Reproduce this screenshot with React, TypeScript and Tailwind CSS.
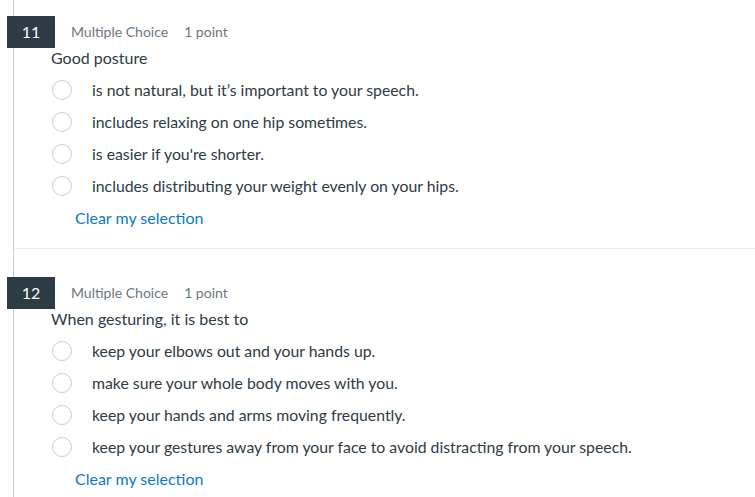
const questions = [
  {
    num: 11,
    text: "Good posture",
    options: [
      "is not natural, but it\u2019s important to your speech.",
      "includes relaxing on one hip sometimes.",
      "is easier if you're shorter.",
      "includes distributing your weight evenly on your hips.",
    ],
  },
  {
    num: 12,
    text: "When gesturing, it is best to",
    options: [
      "keep your elbows out and your hands up.",
      "make sure your whole body moves with you.",
      "keep your hands and arms moving frequently.",
      "keep your gestures away from your face to avoid distracting from your speech.",
    ],
  },
];

function Question({ q, first }: { q: (typeof questions)[number]; first: boolean }) {
  return (
    <div className={first ? "pt-4 pb-5" : "border-t border-[#eeeeee] pt-[28px] pb-5"}>
      <div className="flex items-center">
        <div className="-ml-[7px] flex h-8 w-12 items-center justify-center bg-[#2d3b45] text-[16px] text-white">
          {q.num}
        </div>
        <div className="ml-4 flex gap-4 pb-[2px] text-[14px] text-[#6b7780]">
          <span>Multiple Choice</span>
          <span>1 point</span>
        </div>
      </div>
      <div className="pl-[37px] text-[16px] leading-5 text-[#2d3b45]">{q.text}</div>
      <div className="mt-[6px] pl-[38px]">
        {q.options.map((o) => (
          <label key={o} className="flex h-8 items-center text-[15.8px] text-[#2d3b45]">
            <span className="h-5 w-5 shrink-0 rounded-full border border-[#c7cdd1] bg-white" />
            <span className="ml-5">{o}</span>
          </label>
        ))}
      </div>
      <div className="mt-[6px] pl-[61px] text-[16px] leading-5 text-[#0b7bc1]">Clear my selection</div>
    </div>
  );
}

export default function App() {
  return (
    <div
      className="min-h-screen bg-white"
      style={{ fontFamily: "Lato, 'Liberation Sans', sans-serif" }}
    >
      <div className="ml-[13px] min-h-[497px] border-l border-[#c7cdd1]">
        {questions.map((q, i) => (
          <Question key={q.num} q={q} first={i === 0} />
        ))}
      </div>
    </div>
  );
}
